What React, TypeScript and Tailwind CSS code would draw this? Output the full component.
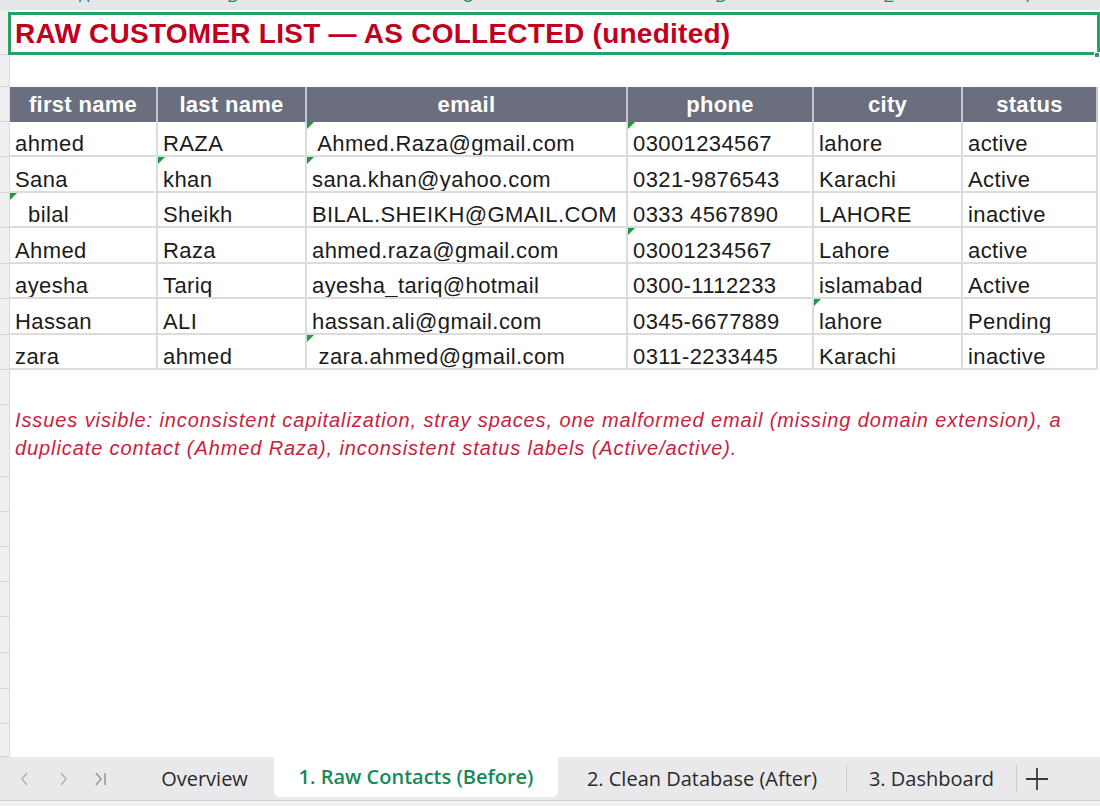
import React from "react";

const cols = [148, 149, 321, 186, 149, 135];
const colClass = "grid grid-cols-[148px_149px_321px_186px_149px_135px]";

type Cell = { t: string; tri?: boolean };
const rows: Cell[][] = [
  [{ t: "ahmed" }, { t: "RAZA" }, { t: " Ahmed.Raza@gmail.com", tri: true }, { t: "03001234567", tri: true }, { t: "lahore" }, { t: "active" }],
  [{ t: "Sana" }, { t: "khan", tri: true }, { t: "sana.khan@yahoo.com", tri: true }, { t: "0321-9876543" }, { t: "Karachi" }, { t: "Active" }],
  [{ t: "  bilal", tri: true }, { t: "Sheikh" }, { t: "BILAL.SHEIKH@GMAIL.COM" }, { t: "0333 4567890" }, { t: "LAHORE" }, { t: "inactive" }],
  [{ t: "Ahmed" }, { t: "Raza" }, { t: "ahmed.raza@gmail.com" }, { t: "03001234567", tri: true }, { t: "Lahore" }, { t: "active" }],
  [{ t: "ayesha" }, { t: "Tariq" }, { t: "ayesha_tariq@hotmail" }, { t: "0300-1112233" }, { t: "islamabad" }, { t: "Active" }],
  [{ t: "Hassan" }, { t: "ALI" }, { t: "hassan.ali@gmail.com" }, { t: "0345-6677889" }, { t: "lahore", tri: true }, { t: "Pending" }],
  [{ t: "zara" }, { t: "ahmed" }, { t: " zara.ahmed@gmail.com", tri: true }, { t: "0311-2233445" }, { t: "Karachi" }, { t: "inactive" }],
];
const dataHeights = ["h-[35px]", "h-[36px]", "h-[35px]", "h-[36px]", "h-[35px]", "h-[36px]", "h-[35px]"];
const headers = ["first name", "last name", "email", "phone", "city", "status"];
const rowHeaderHeights = [45, 32, 35, 35, 36, 35, 36, 35, 36, 35, 35, 72, 35, 35, 35, 35, 36, 36, 35, 33];

export default function App() {
  return (
    <div
      className="w-[1100px] h-[806px] bg-white flex flex-col overflow-hidden text-[#1b1b1b]"
      style={{ fontFamily: '"Liberation Sans", Arial, sans-serif' }}
    >
      {/* column header strip (cut off) */}
      <div className="h-[10px] flex bg-[#e6e6e8] overflow-hidden shrink-0">
        <div className="w-[10px] shrink-0 bg-[#e6e6e8]" />
        {cols.map((w, i) => (
          <div key={i} style={{ width: w }} className="flex justify-center shrink-0">
            <span className="text-[16px] leading-[16px] -mt-[11px] text-[#1f8a64]">{"ABCDEF"[i]}</span>
          </div>
        ))}
      </div>

      <div className="flex h-[747px] shrink-0 overflow-hidden">
        {/* row headers */}
        <div className="w-[10px] shrink-0 bg-[#efeff1] border-r border-[#dcdcdf] flex flex-col">
          {rowHeaderHeights.map((h, i) => (
            <div key={i} style={{ height: h }} className="border-b border-[#d4d4d8] shrink-0" />
          ))}
        </div>

        {/* sheet */}
        <div className="flex-1 flex flex-col">
          {/* title row */}
          <div className="h-[45px] shrink-0 relative">
            <div className="absolute left-[-2px] right-0 top-[2px] h-[43px] border-[3px] border-[#1fa463] flex items-center pl-[4px]">
              <span className="text-[28px] font-bold text-[#c0001f] leading-none tracking-[0.25px]">
                RAW CUSTOMER LIST — AS COLLECTED (unedited)
              </span>
            </div>
            <div className="absolute right-0 bottom-[-3px] w-[6px] h-[6px] bg-[#1fa463] border border-white" />
          </div>
          <div className="h-[32px] shrink-0" />

          {/* header */}
          <div className={`${colClass} h-[35px] shrink-0`}>
            {headers.map((h, i) => (
              <div
                key={i}
                className="bg-[#6b6e7e] border-r-2 border-[#c4c6cd] flex items-center justify-center text-white font-bold text-[22px] tracking-[0.3px]"
              >
                {h}
              </div>
            ))}
          </div>

          {/* data */}
          {rows.map((r, ri) => (
            <div key={ri} className={`${colClass} ${dataHeights[ri]} shrink-0`}>
              {r.map((c, ci) => (
                <div
                  key={ci}
                  className="relative border-r-2 border-b-2 border-[#dcdcdf] flex items-end pl-[5px] text-[22px] leading-[22px] tracking-[0.4px] whitespace-pre overflow-hidden"
                >
                  {c.tri && (
                    <span className="absolute top-0 left-0 w-0 h-0 border-t-[7px] border-t-[#1c9a3e] border-r-[7px] border-r-transparent" />
                  )}
                  {c.t}
                </div>
              ))}
            </div>
          ))}

          <div className="h-[35px] shrink-0" />
          <div className="h-[72px] shrink-0 pl-[5px] pt-[1px] italic text-[20px] leading-[28px] tracking-[0.9px] text-[#c81e3f] whitespace-nowrap">
            Issues visible: inconsistent capitalization, stray spaces, one malformed email (missing domain extension), a
            <br />
            duplicate contact (Ahmed Raza), inconsistent status labels (Active/active).
          </div>
        </div>
      </div>

      {/* tab bar */}
      <div
        className="h-[43px] shrink-0 flex bg-[#e9e9ec] text-[20px]"
        style={{ fontFamily: '"Open Sans", "Noto Sans", sans-serif' }}
      >
        <div className="w-[135px] shrink-0 flex items-center">
          <svg width="12" height="16" viewBox="0 0 12 16" className="ml-[19px]">
            <path d="M8 2 L3 8 L8 14" fill="none" stroke="#b4b4b8" strokeWidth="1.6" />
          </svg>
          <svg width="12" height="16" viewBox="0 0 12 16" className="ml-[26px]">
            <path d="M4 2 L9 8 L4 14" fill="none" stroke="#b4b4b8" strokeWidth="1.6" />
          </svg>
          <svg width="16" height="16" viewBox="0 0 16 16" className="ml-[24px]">
            <path d="M3 2 L8 8 L3 14" fill="none" stroke="#9a9a9e" strokeWidth="1.6" />
            <path d="M12 2 L12 14" fill="none" stroke="#9a9a9e" strokeWidth="1.6" />
          </svg>
        </div>
        <div className="w-[139px] shrink-0 flex items-center justify-center text-[#2a2a2a]">Overview</div>
        <div className="w-[284px] shrink-0 bg-white rounded-b-[6px] h-[40px] flex items-center justify-center text-[#168a58] font-semibold">
          1. Raw Contacts (Before)
        </div>
        <div className="w-[288px] shrink-0 flex items-center justify-center text-[#2a2a2a]">2. Clean Database (After)</div>
        <div className="w-px shrink-0 bg-[#cdcdd1] my-[8px]" />
        <div className="w-[169px] shrink-0 flex items-center justify-center text-[#2a2a2a]">3. Dashboard</div>
        <div className="w-px shrink-0 bg-[#cdcdd1] my-[8px]" />
        <div className="flex items-center pl-[8px]">
          <svg width="24" height="24" viewBox="0 0 24 24">
            <path d="M12 1 V23 M1 12 H23" stroke="#3a3a3a" strokeWidth="1.8" fill="none" />
          </svg>
        </div>
      </div>
      <div className="h-px shrink-0 bg-[#cfcfd3]" />
      <div className="h-[5px] shrink-0 bg-[#f2f2f4]" />
    </div>
  );
}
